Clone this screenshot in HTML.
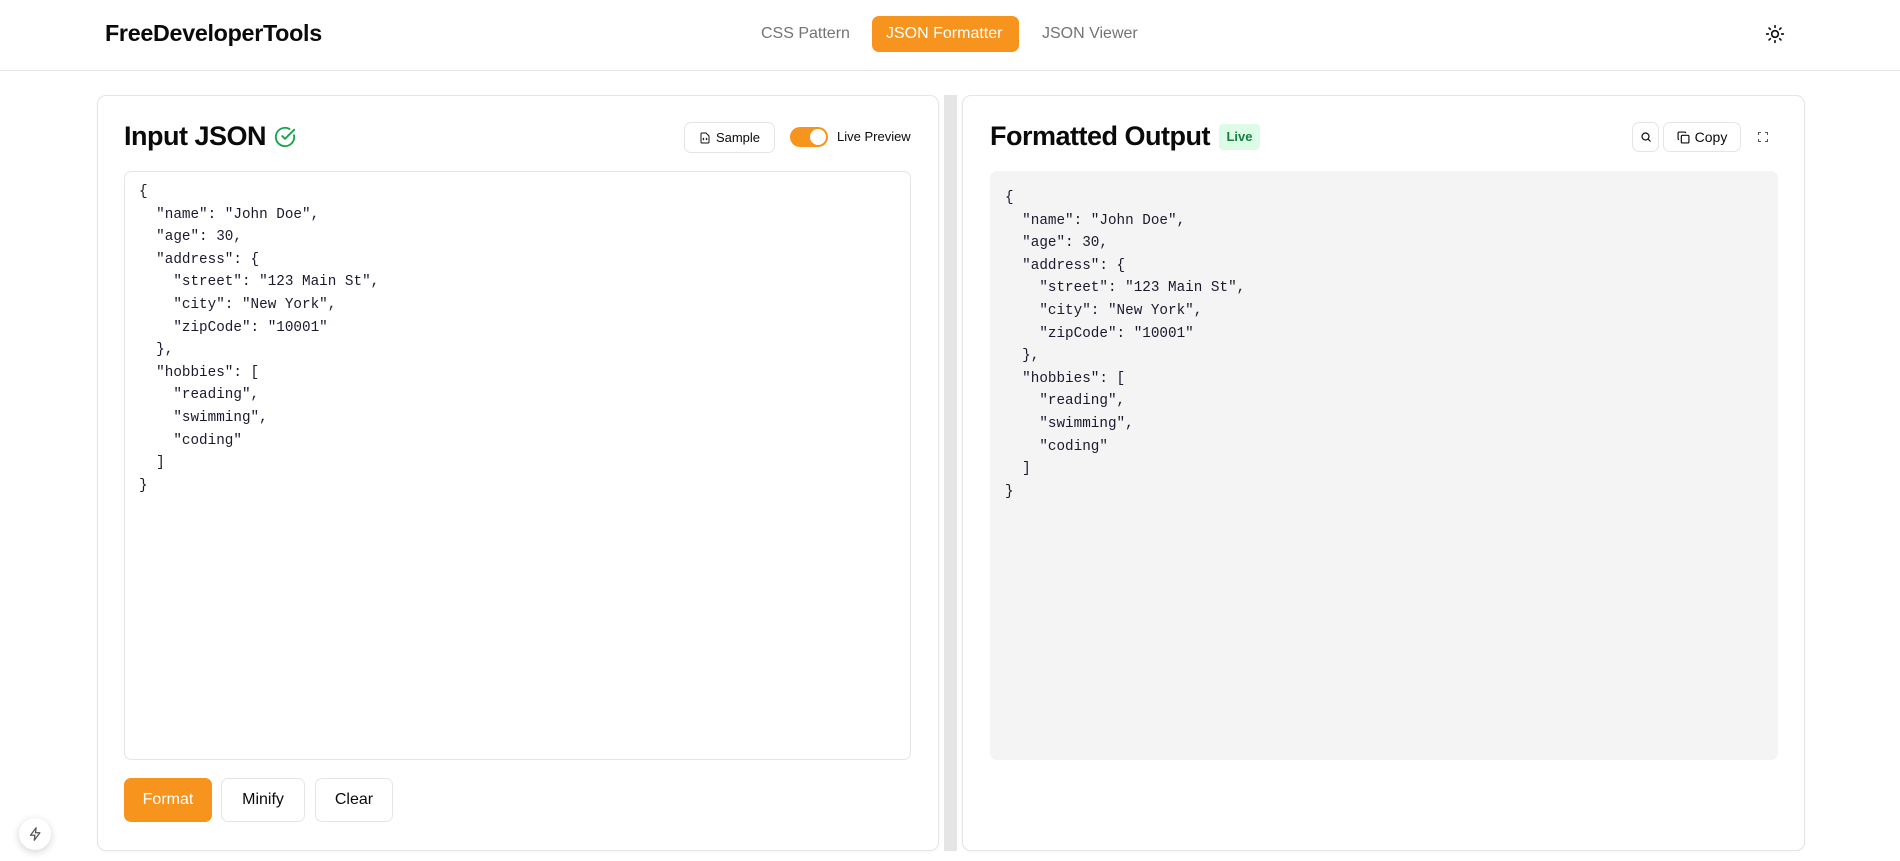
<!DOCTYPE html>
<html><head><meta charset="utf-8"><style>
*{box-sizing:border-box;margin:0;padding:0}
body{width:1900px;height:861px;background:#fff;font-family:"Liberation Sans",sans-serif;color:#0a0a0a;position:relative;overflow:hidden}
.hdr{position:absolute;left:0;top:0;width:1900px;height:71px;border-bottom:1px solid #e5e5e5}
.logo{position:absolute;left:105px;top:20px;font-size:23.3px;font-weight:bold;letter-spacing:-0.3px}
.nav{position:absolute;top:16px;height:36px;line-height:36px;font-size:16px;color:#737373}
.navb{background:#f7941d;color:#fff;border-radius:7px;padding:0 14px}
.panel{position:absolute;top:95px;height:756px;border:1px solid #e5e5e5;border-radius:9px;background:#fff;box-shadow:0 1px 2px rgba(0,0,0,.04)}
.div{position:absolute;left:944px;top:95px;width:13px;height:756px;background:#e5e5e5}
h2{position:absolute;font-size:27px;font-weight:bold;letter-spacing:-0.5px;top:121px}
.btn{position:absolute;border:1px solid #e5e5e5;border-radius:7px;background:#fff;font-size:13px;display:flex;align-items:center;justify-content:center;gap:5px}
pre{position:absolute;font-family:"Liberation Mono","DejaVu Sans Mono",monospace;font-size:14.3px;line-height:22.6px;color:#1a1a2e}
.ta{position:absolute;left:124px;top:171px;width:787px;height:589px;border:1px solid #e5e5e5;border-radius:7px}
.out{position:absolute;left:990px;top:171px;width:788px;height:589px;background:#f4f4f4;border-radius:7px}
.bb{position:absolute;top:778px;height:44px;border:1px solid #e5e5e5;border-radius:7px;font-size:16px;display:flex;align-items:center;justify-content:center;background:#fff}
</style></head><body>
<div class="hdr">
<div class="logo">FreeDeveloperTools</div>
<div class="nav" style="left:761px">CSS Pattern</div>
<div class="nav navb" style="left:872px;width:147px">JSON Formatter</div>
<div class="nav" style="left:1042px">JSON Viewer</div>
<svg style="position:absolute;left:1765px;top:24px" width="20" height="20" viewBox="0 0 24 24" fill="none" stroke="#111" stroke-width="2" stroke-linecap="round"><circle cx="12" cy="12" r="4"/><path d="M12 2v2M12 20v2M4.9 4.9l1.4 1.4M17.7 17.7l1.4 1.4M2 12h2M20 12h2M6.3 17.7l-1.4 1.4M19.1 4.9l-1.4 1.4"/></svg>
</div>
<div class="panel" style="left:97px;width:842px"></div>
<div class="div"></div>
<div class="panel" style="left:962px;width:843px"></div>

<h2 style="left:124px">Input JSON</h2>
<svg style="position:absolute;left:274px;top:126px" width="22" height="22" viewBox="0 0 24 24" fill="none" stroke="#16a34a" stroke-width="2" stroke-linecap="round" stroke-linejoin="round"><path d="M21.8 10A10 10 0 1 1 17 3.3"/><path d="M9 11l3 3L22 4"/></svg>
<div class="btn" style="left:684px;top:122px;width:91px;height:31px"><svg width="12" height="14" viewBox="0 0 24 24" fill="none" stroke="#111" stroke-width="2"><path d="M14 2H6a2 2 0 0 0-2 2v16a2 2 0 0 0 2 2h12a2 2 0 0 0 2-2V8z"/><path d="M10 12l-2 2 2 2M14 12l2 2-2 2"/></svg>Sample</div>
<div style="position:absolute;left:790px;top:127px;width:38px;height:20px;border-radius:10px;background:#f7941d"><div style="position:absolute;right:2px;top:2px;width:16px;height:16px;border-radius:50%;background:#fff"></div></div>
<div style="position:absolute;left:837px;top:129px;font-size:13px">Live Preview</div>
<div class="ta"></div>
<pre style="left:139px;top:181px">{
  "name": "John Doe",
  "age": 30,
  "address": {
    "street": "123 Main St",
    "city": "New York",
    "zipCode": "10001"
  },
  "hobbies": [
    "reading",
    "swimming",
    "coding"
  ]
}</pre>
<div class="bb" style="left:124px;width:88px;background:#f7941d;border-color:#f7941d;color:#fff">Format</div>
<div class="bb" style="left:221px;width:84px">Minify</div>
<div class="bb" style="left:315px;width:78px">Clear</div>

<h2 style="left:990px">Formatted Output</h2>
<div style="position:absolute;left:1219px;top:124px;width:41px;height:26px;border-radius:4px;background:#dcfce7;color:#15803d;font-size:13px;font-weight:bold;text-align:center;line-height:26px">Live</div>
<div class="btn" style="left:1632px;top:122px;width:27px;height:30px"><svg width="12" height="12" viewBox="0 0 24 24" fill="none" stroke="#111" stroke-width="2.4"><circle cx="11" cy="11" r="7"/><path d="M21 21l-5-5"/></svg></div>
<div class="btn" style="left:1663px;top:122px;width:78px;height:30px;font-size:14px"><svg width="13" height="13" viewBox="0 0 24 24" fill="none" stroke="#111" stroke-width="2.2"><rect x="8" y="8" width="14" height="14" rx="2"/><path d="M4 16a2 2 0 0 1-2-2V4a2 2 0 0 1 2-2h10a2 2 0 0 1 2 2"/></svg>Copy</div>
<svg style="position:absolute;left:1757px;top:131px" width="12" height="12" viewBox="0 0 24 24" fill="none" stroke="#555" stroke-width="2"><path d="M3 8V3h5M16 3h5v5M21 16v5h-5M8 21H3v-5"/></svg>
<div class="out"></div>
<pre style="left:1005px;top:187px;line-height:22.6px">{
  "name": "John Doe",
  "age": 30,
  "address": {
    "street": "123 Main St",
    "city": "New York",
    "zipCode": "10001"
  },
  "hobbies": [
    "reading",
    "swimming",
    "coding"
  ]
}</pre>

<div style="position:absolute;left:19px;top:818px;width:32px;height:32px;border-radius:50%;background:#fff;box-shadow:0 2px 8px rgba(0,0,0,.18);display:flex;align-items:center;justify-content:center"><svg width="15" height="16" viewBox="0 0 24 24" fill="none" stroke="#555" stroke-width="2" stroke-linejoin="round"><path d="M13 2L4 14h7l-1 8 9-12h-7z"/></svg></div>
</body></html>
